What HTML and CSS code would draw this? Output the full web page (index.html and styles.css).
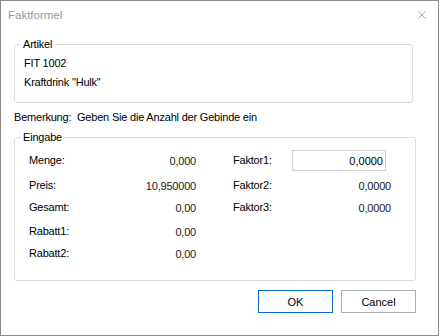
FILE: index.html
```html
<!DOCTYPE html>
<html lang="de">
<head>
    <meta charset="UTF-8">
    <title>Faktformel</title>
    <link rel="stylesheet" href="styles.css">
</head>
<body>
    <div class="window">
        <div class="titlebar">
            <span class="title">Faktformel</span>
            <svg class="close" width="8" height="8" viewBox="0 0 8 8">
                <path d="M0.5 0.5 L7.5 7.5 M7.5 0.5 L0.5 7.5" stroke="#a6a6a6" stroke-width="1" fill="none"/>
            </svg>
        </div>

        <div class="content">
            <!-- Artikel -->
            <fieldset class="group group-artikel">
                <legend>Artikel</legend>
                <div class="line">FIT 1002</div>
                <div class="line">Kraftdrink "Hulk"</div>
            </fieldset>

            <div class="remark">
                <span class="remark-label">Bemerkung:</span>
                <span>Geben Sie die Anzahl der Gebinde ein</span>
            </div>

            <!-- Eingabe -->
            <fieldset class="group group-eingabe">
                <legend>Eingabe</legend>
                <div class="cols">
                    <div class="col col-left">
                        <div class="label">Menge:</div>
                        <div class="value">0,000</div>
                        <div class="label">Preis:</div>
                        <div class="value">10,950000</div>
                        <div class="label">Gesamt:</div>
                        <div class="value">0,00</div>
                        <div class="label">Rabatt1:</div>
                        <div class="value">0,00</div>
                        <div class="label">Rabatt2:</div>
                        <div class="value">0,00</div>
                    </div>
                    <div class="col col-right">
                        <div class="label">Faktor1:</div>
                        <div class="field"><input class="input" type="text" value="0,0000"></div>
                        <div class="label">Faktor2:</div>
                        <div class="value">0,0000</div>
                        <div class="label">Faktor3:</div>
                        <div class="value">0,0000</div>
                    </div>
                </div>
            </fieldset>

            <div class="buttons">
                <button class="btn btn-default">OK</button>
                <button class="btn">Cancel</button>
            </div>
        </div>
    </div>
</body>
</html>
```

FILE: styles.css
```css
* {
    margin: 0;
    padding: 0;
    box-sizing: border-box;
}

body {
    font-family: "Liberation Sans", Arial, sans-serif;
    font-size: 11px;
    letter-spacing: -0.2px;
    color: #000;
    background: #fff;
}

.window {
    width: 439px;
    height: 336px;
    border: 1px solid #8a8a8a;
    background: #fff;
}

/* Titelleiste */
.titlebar {
    height: 27px;
    display: flex;
    align-items: center;
    justify-content: space-between;
    padding: 0 12px 0 7px;
}

.title {
    font-size: 11.5px;
    letter-spacing: 0;
    color: #9a9a9a;
}

.close {
    display: block;
    margin-top: 1px;
}

.content {
    padding-left: 13px;
}

/* Gruppenrahmen */
.group {
    border: 1px solid #dcdcdc;
    border-radius: 3px;
    padding: 0 0 0 5px;
    min-width: 0;
}

.group legend {
    padding: 0 3px;
    line-height: 13px;
    color: #000;
}

.group-artikel {
    width: 399px;
    margin-top: 10px;
    padding-top: 3px;
    padding-bottom: 10px;
}

.group-artikel .line {
    line-height: 19px;
    padding-left: 4px;
}

.remark {
    margin-top: 8px;
    line-height: 13px;
    display: flex;
}

.remark-label {
    width: 63px;
}

.group-eingabe {
    width: 402px;
    margin-top: 7px;
    padding-top: 10px;
    padding-bottom: 20px;
}

.cols {
    display: flex;
    padding-left: 9px;
}

.col {
    display: grid;
    align-items: start;
    line-height: 13px;
}

.col-left {
    grid-template-columns: 100px 67px;
    grid-template-rows: 25px 22px 24px 22px 13px;
}

.col-right {
    margin-left: 37px;
    grid-template-columns: 59px 99px;
    grid-template-rows: 25px 22px 13px;
}

.value {
    text-align: right;
    padding-top: 1px;
    color: #1a1a1a;
}

.input {
    display: block;
    width: 94px;
    height: 21px;
    margin-top: -4px;
    border: 1px solid #cfcfcf;
    padding: 0 2px 0 0;
    font: inherit;
    text-align: right;
    color: #000;
    outline: none;
}

/* Schaltflächen */
.buttons {
    display: flex;
    justify-content: flex-end;
    gap: 8px;
    margin-top: 9px;
    padding-right: 22px;
}

.btn {
    width: 75px;
    height: 23px;
    background: #fff;
    border: 1px solid #adadad;
    font: inherit;
    color: #000;
}

.btn-default {
    border-color: #0a66c8;
}
```
